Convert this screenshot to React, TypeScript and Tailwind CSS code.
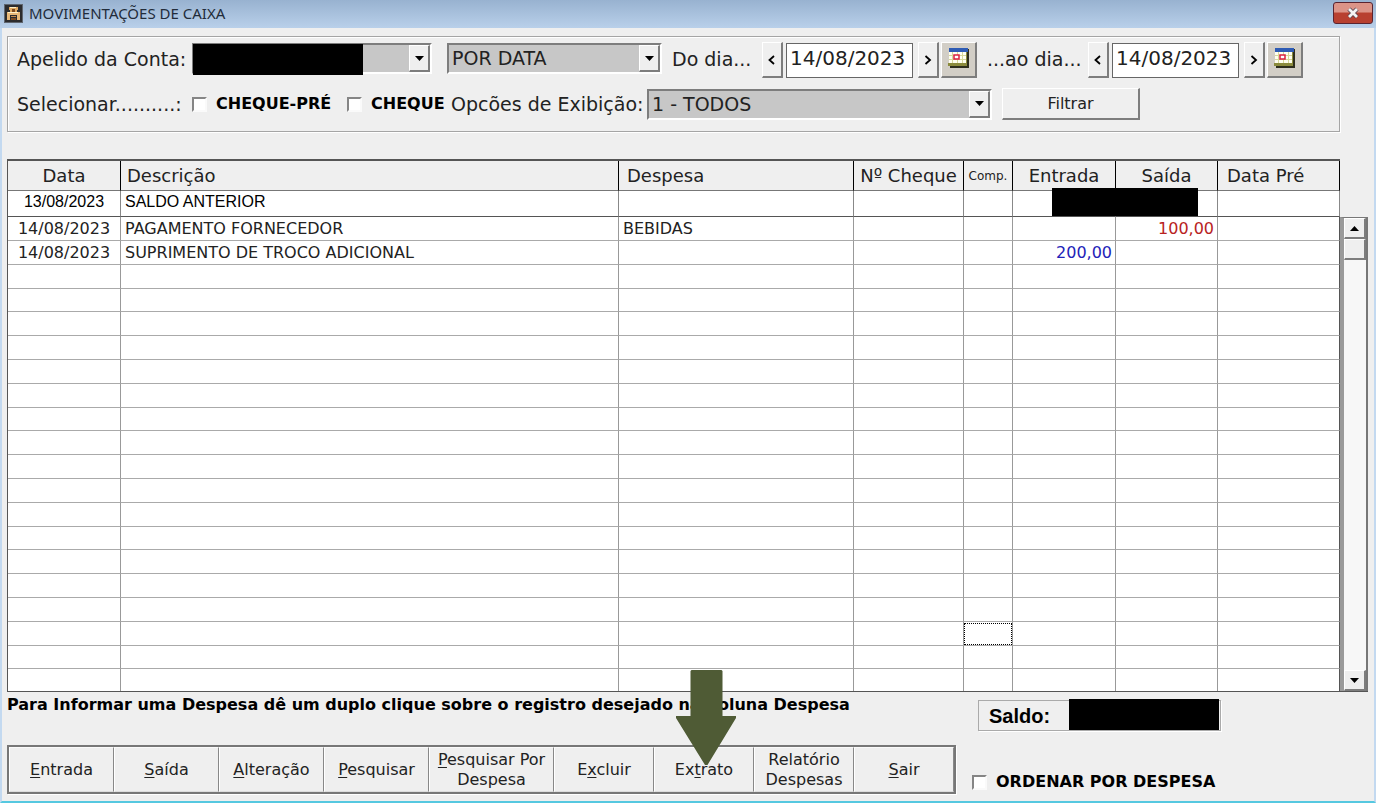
import { useState } from "react";

const raised = "border-t border-l border-b-2 border-r-2 border-t-white border-l-white border-b-[#7d7d7d] border-r-[#7d7d7d] bg-[#efefef]";
const ui = "font-['DejaVu_Sans',Verdana,sans-serif]";

function AppIcon() {
  return (
    <svg width="19" height="19" viewBox="0 0 19 19" aria-hidden="true">
      <rect x="0.5" y="0.5" width="18" height="18" fill="#2c2c2e" stroke="#5f6670" />
      <path d="M5 3h9v3h-1v2h-2V5H8v3H6V6H5z" fill="#e0a860" />
      <path d="M3 8h13v3H3zM3 11h3v5H3zM13 11h3v5h-3z" fill="#e8b878" />
      <path d="M6 3h6v1H6zM4 8h10v1H4z" fill="#fff0c8" />
      <path d="M8 5h3v3H8zM7 14h5v2H7z" fill="#7b4a20" />
      <path d="M7 12h5v1H7z" fill="#c08a50" />
    </svg>
  );
}

function CalendarIcon() {
  return (
    <svg width="21" height="20" viewBox="0 0 21 20" aria-hidden="true">
      <path d="M3 1h18v19H2v-3h1z" fill="#2e2e1c" />
      <path d="M1 0h18v18H0v-3h1z" fill="#8b8b3c" />
      <rect x="1" y="4" width="17" height="11" fill="#fffff0" />
      <rect x="1" y="0" width="19" height="4" fill="#2f5cb4" />
      <path d="M1 7.500h17M1 11.500h17M4.500 4v11M9.500 4v11M14.500 4v11" stroke="#d8d89a" />
      <rect x="6" y="7" width="5" height="4" fill="#fff" stroke="#dc2040" strokeWidth="1.500" />
    </svg>
  );
}

function Arrow({ up = false }: { up?: boolean }) {
  return (
    <svg width="9" height="5" viewBox="0 0 9 5" aria-hidden="true">
      <path d={up ? "M0 5L4.500 0L9 5z" : "M0 0L4.500 5L9 0z"} fill="#000" />
    </svg>
  );
}

function Combo({ label, value, className, masked = false }: { label: string; value: string; className: string; masked?: boolean }) {
  return (
    <div className={`relative flex h-[31px] border-2 border-t-[#7d7d7d] border-l-[#7d7d7d] border-b-white border-r-white bg-[#c7c7c7] ${className}`}>
      <select aria-label={label} className="w-full appearance-none bg-transparent pl-[3px] text-[19px] leading-[27px] text-[#222] outline-none">
        <option>{value}</option>
      </select>
      <span className={`pointer-events-none absolute top-0 right-0 flex h-full w-[21px] items-center justify-center ${raised}`}>
        <Arrow />
      </span>
      {masked && <span className="absolute -top-px -left-px h-[31px] w-[170px] bg-black" />}
    </div>
  );
}

function Check({ children, className = "" }: { children: string; className?: string }) {
  return (
    <label className={`flex items-center text-[16px] leading-5 font-bold whitespace-nowrap text-black ${className}`}>
      <input type="checkbox" className="h-[15px] w-[15px] shrink-0 appearance-none border-2 border-t-[#858585] border-l-[#858585] border-r-[#fafafa] border-b-[#fafafa] bg-white checked:bg-[#444]" />
      {children}
    </label>
  );
}

function Chevron({ right = false }: { right?: boolean }) {
  return (
    <svg width="8" height="10" viewBox="0 0 8 10" aria-hidden="true">
      <path d={right ? "M1.500 1L6 5L1.500 9" : "M6 1L1.500 5L6 9"} fill="none" stroke="#000" strokeWidth="1.800" />
    </svg>
  );
}

function DateBox({ label }: { label: string }) {
  const [value, setValue] = useState("14/08/2023");
  return (
    <div className="flex items-center">
      <button aria-label={`${label}: dia anterior`} className={`flex h-9 w-[21px] items-center justify-center ${raised}`}>
        <Chevron />
      </button>
      <input aria-label={label} value={value} onChange={(e) => setValue(e.target.value)} className="ml-[3px] h-[35px] w-[127px] border border-[#666] bg-white pb-1 pl-[3px] text-[20px] text-[#222] outline-none" />
      <button aria-label={`${label}: dia seguinte`} className={`ml-[5px] flex h-9 w-[21px] items-center justify-center ${raised}`}>
        <Chevron right />
      </button>
      <button aria-label={`${label}: calendário`} className="ml-[2px] flex h-9 w-9 items-center justify-center border-t border-l border-r-2 border-b-2 border-t-white border-l-white border-r-[#7d7d7d] border-b-[#7d7d7d] bg-[#d2cec6] pb-1">
        <CalendarIcon />
      </button>
    </div>
  );
}

const headers = [
  { text: "Data", cls: "text-center" },
  { text: "Descrição", cls: "pl-[6px] text-left" },
  { text: "Despesa", cls: "pl-2 text-left" },
  { text: "Nº Cheque", cls: "text-center" },
  { text: "Comp.", cls: "text-center" },
  { text: "Entrada", cls: "text-center" },
  { text: "Saída", cls: "text-center" },
  { text: "Data Pré", cls: "pl-[9px] text-left" },
];

function Columns() {
  return (
    <colgroup>
      <col className="w-[113px]" />
      <col />
      <col className="w-[235px]" />
      <col className="w-[110px]" />
      <col className="w-[49px]" />
      <col className="w-[103px]" />
      <col className="w-[102px]" />
      <col className="w-[122px]" />
    </colgroup>
  );
}

const records = [
  ["14/08/2023", "PAGAMENTO FORNECEDOR", "BEBIDAS", "", "", "", "100,00", ""],
  ["14/08/2023", "SUPRIMENTO DE TROCO ADICIONAL", "", "", "", "200,00", "", ""],
];
const rows = Array.from({ length: 20 }, (_, i) => records[i] ?? Array<string>(8).fill(""));
const cellStyles = ["text-center", "pl-1", "pl-1", "", "", "pr-[3px] text-right text-[#2222b8]", "pr-[3px] text-right text-[#b82222]", ""];

function rowHeight(i: number) {
  if (i === 19) return "h-[22px]";
  return i % 5 === 3 ? "h-[23px]" : "h-6";
}

const actions = [
  { pre: "", key: "E", post: "ntrada", w: "w-[105px]" },
  { pre: "", key: "S", post: "aída", w: "w-[105px]" },
  { pre: "", key: "A", post: "lteração", w: "w-[105px]" },
  { pre: "", key: "P", post: "esquisar", w: "w-[105px]" },
  { pre: "", key: "P", post: "esquisar Por Despesa", w: "w-[125px]" },
  { pre: "E", key: "x", post: "cluir", w: "w-[100px]" },
  { pre: "Ex", key: "t", post: "rato", w: "w-[100px]" },
  { pre: "Relatório Despesas", key: "", post: "", w: "w-[100px]" },
  { pre: "", key: "S", post: "air", w: "w-[100px]" },
];

export default function App() {
  return (
    <div className={`flex min-h-screen flex-col border-x-2 border-b-2 border-x-[#c3d9f0] border-b-[#55c8e0] bg-[#efefef] text-[#222] ${ui}`}>
      <header className="-mx-0.5 flex h-7 items-center bg-linear-to-b from-[#98b2d0] to-[#b9d0ea] pr-[3px] pb-0.5 pl-1">
        <AppIcon />
        <h1 className="ml-1.5 font-['Noto_Sans',sans-serif] text-[15px] leading-5 text-[#222c3a]">MOVIMENTAÇÕES DE CAIXA</h1>
        <button aria-label="Fechar" className="ml-auto flex h-[22px] w-10 items-center justify-center rounded-[3px] border border-[#5a2430] bg-linear-to-b from-[#dc9488] from-45% to-[#b84030] to-50%">
          <svg width="14" height="12" viewBox="0 0 14 12" aria-hidden="true">
            <path d="M3 2L11 10M11 2L3 10" stroke="#5a4550" strokeWidth="4.500" />
            <path d="M3 2L11 10M11 2L3 10" stroke="#f4f4f4" strokeWidth="2.800" />
          </svg>
        </button>
      </header>

      <section className="mt-2 mr-[34px] ml-[5px] h-[96px] border border-[#a5a5a5] pt-[5px] pl-[9px] text-[19px] shadow-[inset_1px_1px_0_#fff,1px_1px_0_#fff]">
        <div className="flex h-9 items-start leading-[34px] whitespace-nowrap">
          <span className="w-[175px]">Apelido da Conta:</span>
          <Combo label="Apelido da Conta" value="" masked className="mt-px w-[240px]" />
          <Combo label="Período" value="POR DATA" className="mt-px ml-[15px] w-[215px]" />
          <span className="ml-[10px] w-[90px]">Do dia...</span>
          <DateBox label="Do dia" />
          <span className="ml-[10px] w-[101px]">...ao dia...</span>
          <DateBox label="Ao dia" />
        </div>
        <div className="mt-2 flex h-9 items-center whitespace-nowrap">
          <span className="w-[175px]">Selecionar..........:</span>
          <Check className="w-[155px] gap-[9px]">CHEQUE-PRÉ</Check>
          <Check className="w-[104px] gap-[9px]">CHEQUE</Check>
          <span className="w-[196px]">Opcões de Exibição:</span>
          <Combo label="Opções de Exibição" value="1 - TODOS" className="w-[345px]" />
          <button className={`ml-[10px] h-8 w-[138px] text-[16px] ${raised}`}>Filtrar</button>
        </div>
      </section>

      <main className="mt-[27px] mr-[6px] ml-[5px]">
        <div className="mr-7">
          <table className="w-full table-fixed border-separate border-spacing-0 border-t-2 border-l border-[#555]">
            <Columns />
            <thead>
              <tr className="h-[30px]">
                {headers.map((h) => (
                  <th key={h.text} className={`border-r border-b border-r-black border-b-[#777] p-0 font-normal whitespace-nowrap ${h.text === "Comp." ? "text-[12px]" : "text-[18px]"} leading-6 ${h.cls}`}>
                    {h.text}
                  </th>
                ))}
              </tr>
            </thead>
            <tbody>
              <tr className="h-[26px] font-['Liberation_Sans',sans-serif] text-[16px] leading-5 text-black">
                <td className="border-r border-b border-r-[#888] border-b-[#555] bg-white p-0 pb-1 text-center">13/08/2023</td>
                <td className="border-r border-b border-r-[#888] border-b-[#555] bg-white p-0 pb-1 pl-1">SALDO ANTERIOR</td>
                <td className="border-r border-b border-r-[#888] border-b-[#555] bg-white p-0" />
                <td className="border-r border-b border-r-[#888] border-b-[#555] bg-white p-0" />
                <td className="border-r border-b border-r-[#888] border-b-[#555] bg-white p-0" />
                <td className="relative border-r border-b border-r-[#888] border-b-[#555] bg-white p-0">
                  <span className="absolute -top-[3px] left-[39px] z-10 h-7 w-[146px] bg-black" />
                </td>
                <td className="border-r border-b border-r-[#888] border-b-[#555] bg-white p-0" />
                <td className="border-r border-b border-r-[#888] border-b-[#555] bg-white p-0" />
              </tr>
            </tbody>
          </table>
        </div>
        <div className="flex border-b border-l border-[#555]">
          <table className="min-w-0 flex-1 table-fixed border-separate border-spacing-0 text-[16px] leading-5">
            <Columns />
            <tbody>
              {rows.map((r, i) => (
                <tr key={i} className={rowHeight(i)}>
                  {r.map((c, j) => (
                    <td key={j} className={`overflow-hidden border-r bg-white p-0 whitespace-nowrap ${j === 7 ? "border-r-[#555]" : "border-r-[#999]"} ${i === 19 ? "" : "border-b border-b-[#aaa]"} ${cellStyles[j]}`}>
                      {i === 17 && j === 4 ? <div className="h-[22px] border border-dotted border-black" /> : c}
                    </td>
                  ))}
                </tr>
              ))}
            </tbody>
          </table>
          <div className="flex w-7 flex-col border-t border-r-2 border-l-4 border-t-[#777] border-r-[#777] border-l-[#9a9a9a] bg-[#f7f7f7]">
            <button aria-label="Rolar para cima" className={`flex h-[21px] items-center justify-center ${raised}`}><Arrow up /></button>
            <span className={`h-[21px] ${raised}`} />
            <button aria-label="Rolar para baixo" className={`mt-auto flex h-[21px] items-center justify-center ${raised}`}><Arrow /></button>
          </div>
        </div>
      </main>

      <footer className="flex justify-between pr-[153px] pl-[5px]">
        <div>
          <p className="mt-[3px] text-[16px] leading-5 font-bold whitespace-nowrap text-black">Para Informar uma Despesa dê um duplo clique sobre o registro desejado na Coluna Despesa</p>
          <nav className="mt-[30px] flex h-[49px] w-[949px] border-2 border-[#777] shadow-[1px_1px_0_#fff]">
            {actions.map((a, i) => (
              <div key={i} className={`relative ${a.w} shrink grow`}>
                <button className="h-full w-full border border-t-[#fafafa] border-l-white border-r-[#888] border-b-[#ddd] px-0.5 text-[16px] leading-5">
                  {a.pre}
                  <span className="underline underline-offset-2">{a.key}</span>
                  {a.post}
                </button>
                {a.pre === "Ex" && (
                  <svg className="pointer-events-none absolute -top-[77px] left-[22px]" width="61" height="96" viewBox="0 0 61 96" aria-hidden="true">
                    <path d="M14.500 1L15.500 0H45.500L46.500 1V46H60V48L31.500 95H29L0 48V46H14.500z" fill="#4f5b35" />
                  </svg>
                )}
              </div>
            ))}
          </nav>
        </div>
        <div className="w-[243px] pt-2">
          <div className="relative flex h-[31px] items-center border border-[#aaa] pl-[10px] font-['Liberation_Sans',sans-serif] text-[20px] font-bold text-black shadow-[1px_1px_0_#fff]">
            Saldo:
            <span className="absolute -top-0.5 right-px h-[31px] w-[150px] bg-black" />
          </div>
          <Check className="mt-[41px] -ml-1.5 gap-[9px]">ORDENAR POR DESPESA</Check>
        </div>
      </footer>
    </div>
  );
}
